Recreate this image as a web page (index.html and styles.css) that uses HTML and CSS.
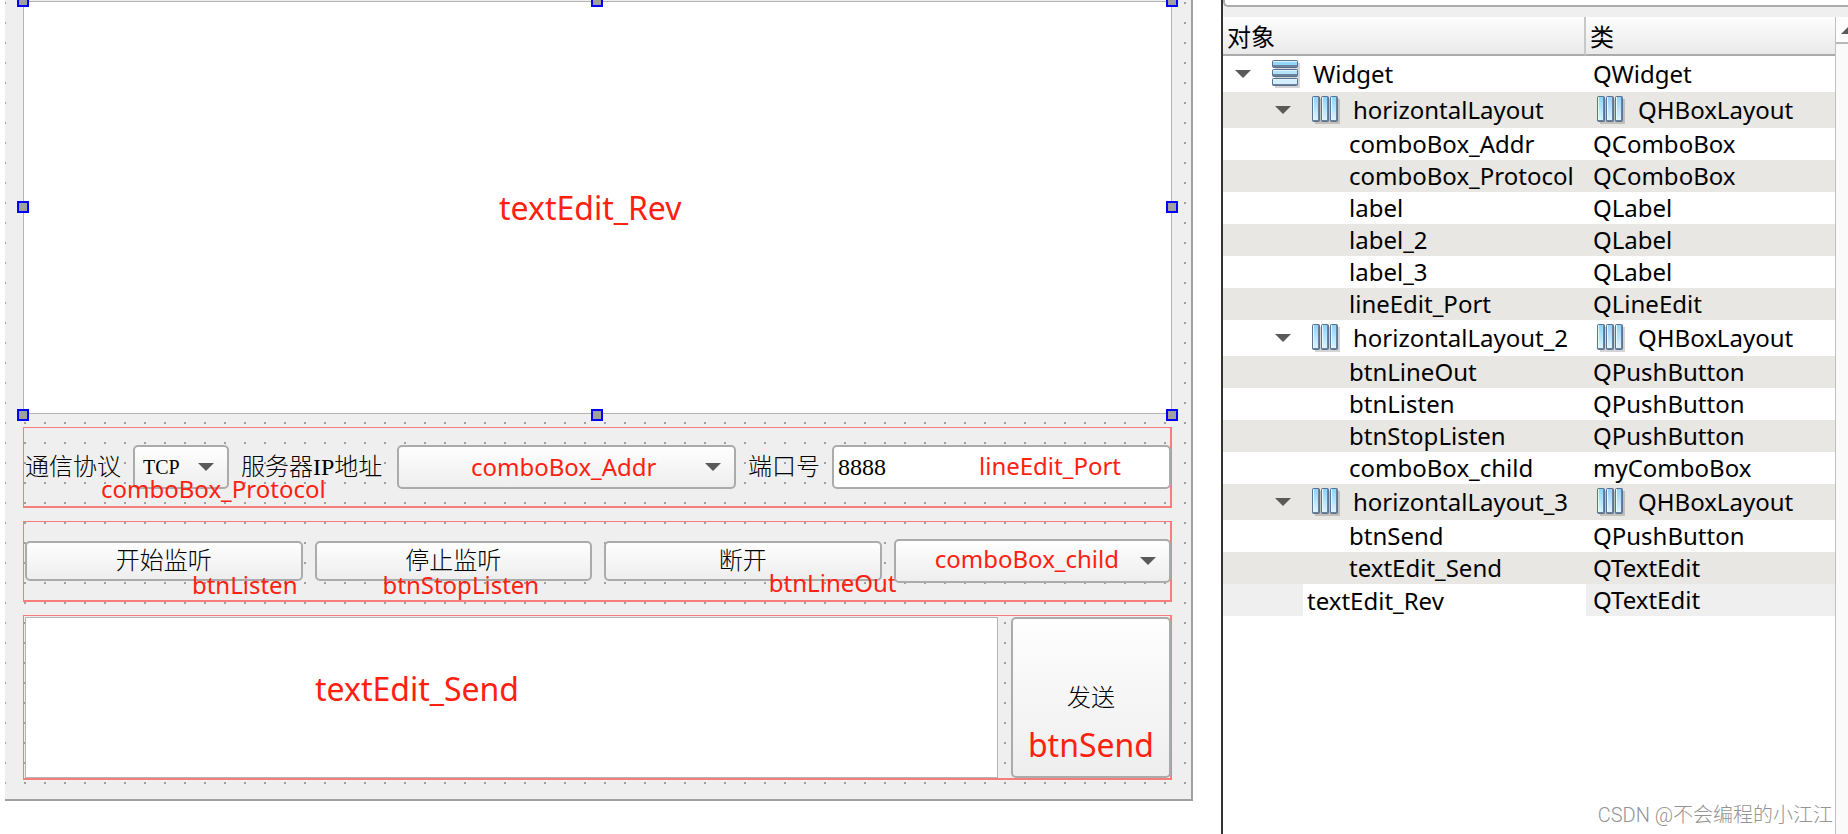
FILE: index.html
```html
<!DOCTYPE html>
<html lang="zh-CN">
<head>
<meta charset="utf-8">
<title>Widget</title>
<link rel="stylesheet" href="styles.css">
</head>
<body>
<svg class="defs" aria-hidden="true">
  <defs>
    <linearGradient id="bar" x1="0" y1="0" x2="0" y2="1"><stop offset="0" stop-color="#8fd3fb"/><stop offset="1" stop-color="#dcf3ff"/></linearGradient>
    <symbol id="arrow" viewBox="0 0 16 8"><path d="M0 0h16L8 8z" fill="#5a5a5a"/></symbol>
    <symbol id="hbox" viewBox="0 0 28 28">
      <path d="M3 3h25v25H3z" fill="#000" opacity=".17"/>
      <g stroke="#5b7390" stroke-width="1"><rect x=".5" y=".5" width="7" height="25" rx="1" fill="#6c819b"/><rect x="9.500" y=".5" width="7" height="25" rx="1" fill="#6c819b"/><rect x="18.500" y=".5" width="7" height="25" rx="1" fill="#6c819b"/></g>
      <path d="M1 1h5v23H1zM10 1h5v23h-5zM20 1h4v23h-4z" fill="url(#bar)"/>
      <path d="M1.500 1v23M10.500 1v23M19.500 1v23" stroke="#e8f8ff"/>
    </symbol>
    <symbol id="vbox" viewBox="0 0 28 28">
      <path d="M3 3h25v25H3z" fill="#000" opacity=".17"/>
      <g stroke="#5b7390" stroke-width="1"><rect x=".5" y=".5" width="25" height="7" rx="1" fill="#6c819b"/><rect x=".5" y="9.500" width="25" height="7" rx="1" fill="#6c819b"/><rect x=".5" y="18.500" width="25" height="7" rx="1" fill="#6c819b"/></g>
      <path d="M1 1h24v4H1z" fill="#93d6fc"/><path d="M1 10h24v4H1z" fill="#b4e2fb"/><path d="M1 19h24v5H1z" fill="#d3effd"/>
      <path d="M1 1.500h24M1 10.500h24M1 19.500h24" stroke="#dcf3ff"/>
    </symbol>
  </defs>
</svg>
<div class="workspace">
  <main class="canvas">
    <form class="form">
      <div class="slot receive">
        <textarea class="edit edit-receive" aria-label="textEdit_Rev"></textarea>
        <span class="note note-large note-receive">textEdit_Rev</span>
        <i class="handle top start"></i><i class="handle top mid"></i><i class="handle top end"></i>
        <i class="handle center start"></i><i class="handle center end"></i>
        <i class="handle bottom start"></i><i class="handle bottom mid"></i><i class="handle bottom end"></i>
      </div>
      <div class="layout">
        <label for="protocol">通信协议</label>
        <div class="slot protocol">
          <select id="protocol" class="control combo"><option>TCP</option></select>
          <svg class="caret"><use href="#arrow"/></svg>
          <span class="note note-protocol">comboBox_Protocol</span>
        </div>
        <label class="label-addr" for="addr">服务器IP地址</label>
        <div class="slot grow">
          <select id="addr" class="control combo"><option></option></select>
          <svg class="caret"><use href="#arrow"/></svg>
          <span class="note note-addr">comboBox_Addr</span>
        </div>
        <label for="port">端口号</label>
        <div class="slot grow">
          <input id="port" class="control line" type="text" value="8888">
          <span class="note note-port">lineEdit_Port</span>
        </div>
      </div>
      <div class="layout">
        <div class="slot grow"><button type="button" class="control push">开始监听</button><span class="note note-listen">btnListen</span></div>
        <div class="slot grow"><button type="button" class="control push">停止监听</button><span class="note note-stop">btnStopListen</span></div>
        <div class="slot grow"><button type="button" class="control push">断开</button><span class="note note-lineout">btnLineOut</span></div>
        <div class="slot grow">
          <select class="control combo" aria-label="comboBox_child"><option></option></select>
          <svg class="caret"><use href="#arrow"/></svg>
          <span class="note note-child">comboBox_child</span>
        </div>
      </div>
      <div class="layout layout-send">
        <div class="slot grow"><textarea class="edit edit-send" aria-label="textEdit_Send"></textarea><span class="note note-large note-text-send">textEdit_Send</span></div>
        <div class="slot send"><button type="button" class="control push push-send">发送</button><span class="note note-large note-send">btnSend</span></div>
      </div>
    </form>
  </main>
  <aside class="inspector">
    <div class="filter"></div>
    <div class="tree-area">
      <table class="tree">
        <thead><tr><th class="col-object">对象</th><th>类</th></tr></thead>
        <tbody>
          <tr class="tall"><td><div class="cell root"><svg class="twist"><use href="#arrow"/></svg><svg class="icon"><use href="#vbox"/></svg>Widget</div></td><td>QWidget</td></tr>
          <tr class="tall"><td><div class="cell branch"><svg class="twist"><use href="#arrow"/></svg><svg class="icon"><use href="#hbox"/></svg>horizontalLayout</div></td><td><div class="cell kind"><svg class="icon"><use href="#hbox"/></svg>QHBoxLayout</div></td></tr>
          <tr><td class="leaf">comboBox_Addr</td><td>QComboBox</td></tr>
          <tr><td class="leaf">comboBox_Protocol</td><td>QComboBox</td></tr>
          <tr><td class="leaf">label</td><td>QLabel</td></tr>
          <tr><td class="leaf">label_2</td><td>QLabel</td></tr>
          <tr><td class="leaf">label_3</td><td>QLabel</td></tr>
          <tr><td class="leaf">lineEdit_Port</td><td>QLineEdit</td></tr>
          <tr class="tall"><td><div class="cell branch"><svg class="twist"><use href="#arrow"/></svg><svg class="icon"><use href="#hbox"/></svg>horizontalLayout_2</div></td><td><div class="cell kind"><svg class="icon"><use href="#hbox"/></svg>QHBoxLayout</div></td></tr>
          <tr><td class="leaf">btnLineOut</td><td>QPushButton</td></tr>
          <tr><td class="leaf">btnListen</td><td>QPushButton</td></tr>
          <tr><td class="leaf">btnStopListen</td><td>QPushButton</td></tr>
          <tr><td class="leaf">comboBox_child</td><td>myComboBox</td></tr>
          <tr class="tall"><td><div class="cell branch"><svg class="twist"><use href="#arrow"/></svg><svg class="icon"><use href="#hbox"/></svg>horizontalLayout_3</div></td><td><div class="cell kind"><svg class="icon"><use href="#hbox"/></svg>QHBoxLayout</div></td></tr>
          <tr><td class="leaf">btnSend</td><td>QPushButton</td></tr>
          <tr><td class="leaf">textEdit_Send</td><td>QTextEdit</td></tr>
          <tr class="current"><td class="renaming"><input class="rename" type="text" value="textEdit_Rev" aria-label="对象"></td><td>QTextEdit</td></tr>
        </tbody>
      </table>
      <div class="scrollbar"><button type="button" class="scroll-up" aria-label="向上滚动"><svg class="scroll-arrow" viewBox="0 0 16 8"><path d="M8 0l8 8H0z" fill="#5a5a5a"/></svg></button></div>
    </div>
    <span class="watermark">CSDN @不会编程的小江江</span>
  </aside>
</div>
</body>
</html>
```
FILE: styles.css
```css
* { box-sizing: border-box; }

body {
  margin: 0;
  overflow: hidden;
  background: #fff;
  color: #000;
  font: 24px/32px "Noto Sans", "Noto Sans CJK SC", sans-serif;
}

.defs { position: absolute; width: 0; height: 0; }

.workspace {
  display: grid;
  grid-template-columns: 1221fr 627fr;
  min-height: 100vh;
}

/* Form being designed */
.canvas { padding: 0 28px 33px 5px; }

.form {
  display: flex;
  flex-direction: column;
  gap: 13px;
  padding: 1px 19px 19px 18px;
  border: solid #a0a0a0;
  border-width: 0 2px 2px 0;
  background: #efefef conic-gradient(from 270deg at 2px 2px, #a0a0a0 90deg, transparent 0) -1px 2px / 20px 20px;
}

.slot { position: relative; display: flex; min-width: 0; }
.grow { flex: 1; }
.protocol { width: 96px; }
.send { width: 160px; }

.edit {
  display: block;
  width: 100%;
  border: 1px solid #b4b4b4;
  background: #fff;
  font: inherit;
  resize: none;
  outline: none;
}
.edit-receive { height: 413px; }
.edit-send { height: 161px; margin-right: 1px; }

.layout {
  display: flex;
  align-items: center;
  gap: 12px;
  min-height: 81px;
  padding-left: 1px;
  border: solid #f77c7c;
  border-width: 1px 2px 2px 1px;
  font-family: "Liberation Serif", "Noto Sans CJK SC", serif;
  font-weight: 300;
}
.layout > :last-child { margin-right: -1px; }
.layout-send { align-items: stretch; padding-top: 1px; }
.layout label { white-space: nowrap; }
.label-addr { min-width: 144px; }

.control {
  width: 100%;
  margin: 0;
  border: 2px solid #ababab;
  border-radius: 5px;
  background: linear-gradient(#fefefe, #eee);
  color: #000;
  font: inherit;
  line-height: 32px;
}
.combo { height: 44px; padding: 0 32px 0 8px; appearance: none; font-size: 20px; }
.push { height: 40px; padding: 0; }
.push-send { height: 161px; }
.line { height: 44px; padding: 0 4px; background: #fff; }

.caret {
  position: absolute;
  top: 18px;
  right: 15px;
  width: 16px;
  height: 8px;
  pointer-events: none;
}

/* Red annotations lying over the widgets */
.note {
  position: absolute;
  color: #ff2010;
  font: 24px/32px "Noto Sans", sans-serif;
  white-space: nowrap;
  pointer-events: none;
}
.note-large { font-size: 32px; line-height: 40px; }
.note-receive { top: 187px; left: 476px; }
.note-protocol { top: 28px; left: -32px; }
.note-addr { top: 6px; left: 74px; }
.note-port { top: 5px; right: 50px; }
.note-listen { top: 28px; right: 5px; }
.note-stop { top: 28px; left: 68px; }
.note-lineout { top: 26px; right: -15px; }
.note-child { top: 4px; right: 52px; }
.note-text-send { top: 52px; left: 290px; }
.note-send { top: 108px; right: 17px; }

.handle {
  position: absolute;
  width: 12px;
  height: 12px;
  border: 2px solid #00f;
  background: #a0a0a0;
}
.top { top: -6px; }
.center { top: 200px; }
.bottom { bottom: -7px; }
.start { left: -6px; }
.mid { left: calc(50% - 7px); }
.end { right: -6px; }

/* Object inspector */
.inspector {
  position: relative;
  display: flex;
  flex-direction: column;
  border-left: 2px solid #333;
}

.filter {
  height: 17px;
  background: #efefef;
}
.filter::before {
  content: "";
  display: block;
  height: 5px;
  border: solid #ababab;
  border-width: 0 0 2px 2px;
  border-bottom-left-radius: 5px;
  background: #fff;
}

.tree-area { display: flex; flex: 1; align-items: stretch; }

.tree {
  flex: 1;
  align-self: flex-start;
  border-collapse: separate;
  border-spacing: 0;
  table-layout: fixed;
}
.tree th {
  height: 39px;
  padding: 2px 4px 0;
  border-bottom: 2px solid #ababab;
  background: linear-gradient(#fdfdfd, #eaeaea);
  font-weight: 400;
  text-align: left;
}
.tree .col-object { width: 363px; border-right: 2px solid #c8c8c8; }
.tree td { height: 32px; padding: 0 0 0 7px; white-space: nowrap; }
.tree .tall td { height: 36px; }
.tree tbody tr:nth-child(even) { background: #e8e7e3; }
.tree tbody .current { background: #efefef; }
.tree .leaf { padding-left: 126px; }
.tree .renaming { padding-left: 80px; }

.cell { display: flex; align-items: center; }
.root { padding-left: 5px; }
.branch { padding-left: 45px; }
.kind { padding-left: 4px; }
.twist { width: 16px; height: 8px; margin-right: 21px; }
.icon { width: 28px; height: 28px; margin-right: 13px; }

.rename {
  display: block;
  width: 100%;
  height: 32px;
  padding: 2px 4px 0;
  border: 0;
  background: #fff;
  color: #000;
  font: inherit;
  outline: none;
}

.scrollbar {
  width: 13px;
  overflow: hidden;
  border-left: 1px solid #c0c0c0;
  background: #fafafa;
}
.scroll-up {
  display: block;
  width: 26px;
  height: 27px;
  padding: 0 0 0 5px;
  border: 0;
  border-bottom: 2px solid #b8b8b8;
  background: #fdfdfd;
}
.scroll-arrow { display: block; width: 16px; height: 8px; }

.watermark {
  position: absolute;
  right: 15px;
  bottom: 3px;
  color: #949494;
  font: 300 20px/32px Roboto, "Noto Sans CJK SC", sans-serif;
}
```
